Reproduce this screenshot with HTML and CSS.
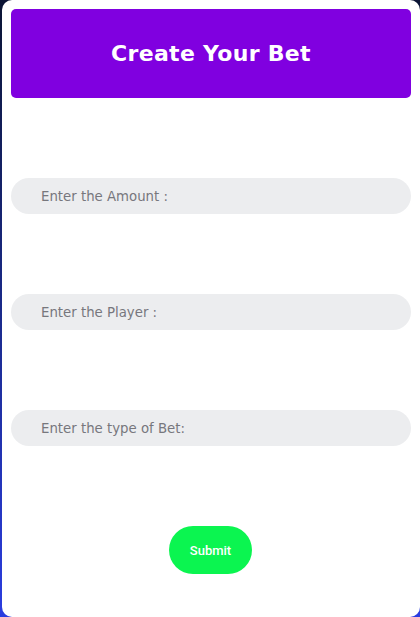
FILE: index.html
```html
<!DOCTYPE html>
<html>
<head>
<meta charset="utf-8">
<link rel="stylesheet" href="styles.css">
</head>
<body>
<div class="card">
  <div class="header"><h1 class="title">Create Your Bet</h1></div>
  <form class="form">
    <input class="field" type="text" placeholder="Enter the Amount :">
    <input class="field" type="text" placeholder="Enter the Player :">
    <input class="field" type="text" placeholder="Enter the type of Bet:">
    <button class="submit" type="button">Submit</button>
  </form>
</div>
</body>
</html>
```
FILE: styles.css
```css
html, body {
  margin: 0;
  height: 100%;
}
body {
  background: linear-gradient(180deg, #0b1434 0%, #1a2a8a 50%, #2b3de0 100%);
  overflow: hidden;
}
.card {
  margin-left: 2px;
  width: 418px;
  height: 617px;
  box-sizing: border-box;
  background: #fff;
  border-radius: 10px;
  padding: 9px 9px 0 9px;
}
.header {
  height: 89px;
  background: #8000e0;
  border-radius: 5px;
  display: flex;
  align-items: center;
  justify-content: center;
}
.title {
  margin: 0;
  color: #fff;
  font-family: "DejaVu Sans", sans-serif;
  font-weight: bold;
  font-size: 22px;
  letter-spacing: 0.3px;
}
.form {
  margin-top: 80px;
  display: flex;
  flex-direction: column;
  align-items: stretch;
  gap: 80px;
}
.field {
  height: 36px;
  box-sizing: border-box;
  border: none;
  outline: none;
  border-radius: 18px;
  background: #ecedef;
  padding: 0 0 0 30px;
  font-family: "DejaVu Sans", sans-serif;
  font-size: 13.3px;
}
.field::placeholder {
  color: #77777d;
}
.submit {
  align-self: center;
  margin-right: 1px;
  width: 83px;
  height: 48px;
  border: none;
  border-radius: 24px;
  background: #0bf550;
  color: #fff;
  font-family: Roboto, sans-serif;
  font-size: 13px;
  font-weight: 500;
  cursor: pointer;
}
```
